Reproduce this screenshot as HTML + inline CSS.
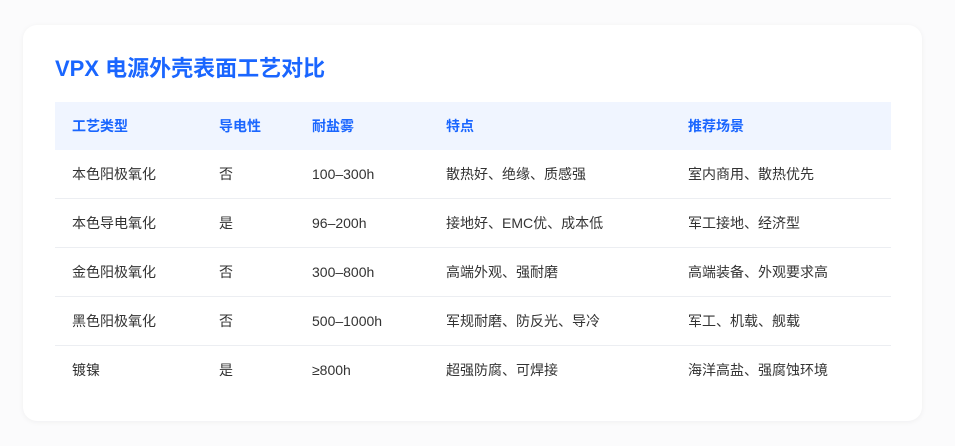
<!DOCTYPE html>
<html><head><meta charset="utf-8"><style>
body{margin:0;background:#fbfbfc;width:955px;height:446px;overflow:hidden;font-family:"Liberation Sans","Noto Sans CJK SC",sans-serif;}
.card{position:absolute;left:23px;top:25px;width:899px;height:396px;background:#fff;border-radius:14px;box-shadow:0 1px 6px rgba(0,0,0,0.05);}
h1{position:absolute;left:32px;top:28px;margin:0;font-size:22px;font-weight:bold;color:#1a66ff;line-height:32px;}
table{position:absolute;left:32px;top:77px;width:836px;border-collapse:collapse;font-size:14px;color:#333;}
th{background:#f0f5ff;color:#1a66ff;font-weight:bold;text-align:left;height:48px;padding:0 0 0 17px;}
td{height:48px;padding:0 0 0 17px;border-bottom:1px solid #eceef2;}
tr:last-child td{border-bottom:none;}
</style></head><body>
<div class="card">
<h1>VPX 电源外壳表面工艺对比</h1>
<table>
<colgroup><col style="width:147px"><col style="width:93px"><col style="width:134px"><col style="width:242px"><col></colgroup>
<tr><th>工艺类型</th><th>导电性</th><th>耐盐雾</th><th>特点</th><th>推荐场景</th></tr>
<tr><td>本色阳极氧化</td><td>否</td><td>100–300h</td><td>散热好、绝缘、质感强</td><td>室内商用、散热优先</td></tr>
<tr><td>本色导电氧化</td><td>是</td><td>96–200h</td><td>接地好、EMC优、成本低</td><td>军工接地、经济型</td></tr>
<tr><td>金色阳极氧化</td><td>否</td><td>300–800h</td><td>高端外观、强耐磨</td><td>高端装备、外观要求高</td></tr>
<tr><td>黑色阳极氧化</td><td>否</td><td>500–1000h</td><td>军规耐磨、防反光、导冷</td><td>军工、机载、舰载</td></tr>
<tr><td>镀镍</td><td>是</td><td>≥800h</td><td>超强防腐、可焊接</td><td>海洋高盐、强腐蚀环境</td></tr>
</table>
</div>
</body></html>
